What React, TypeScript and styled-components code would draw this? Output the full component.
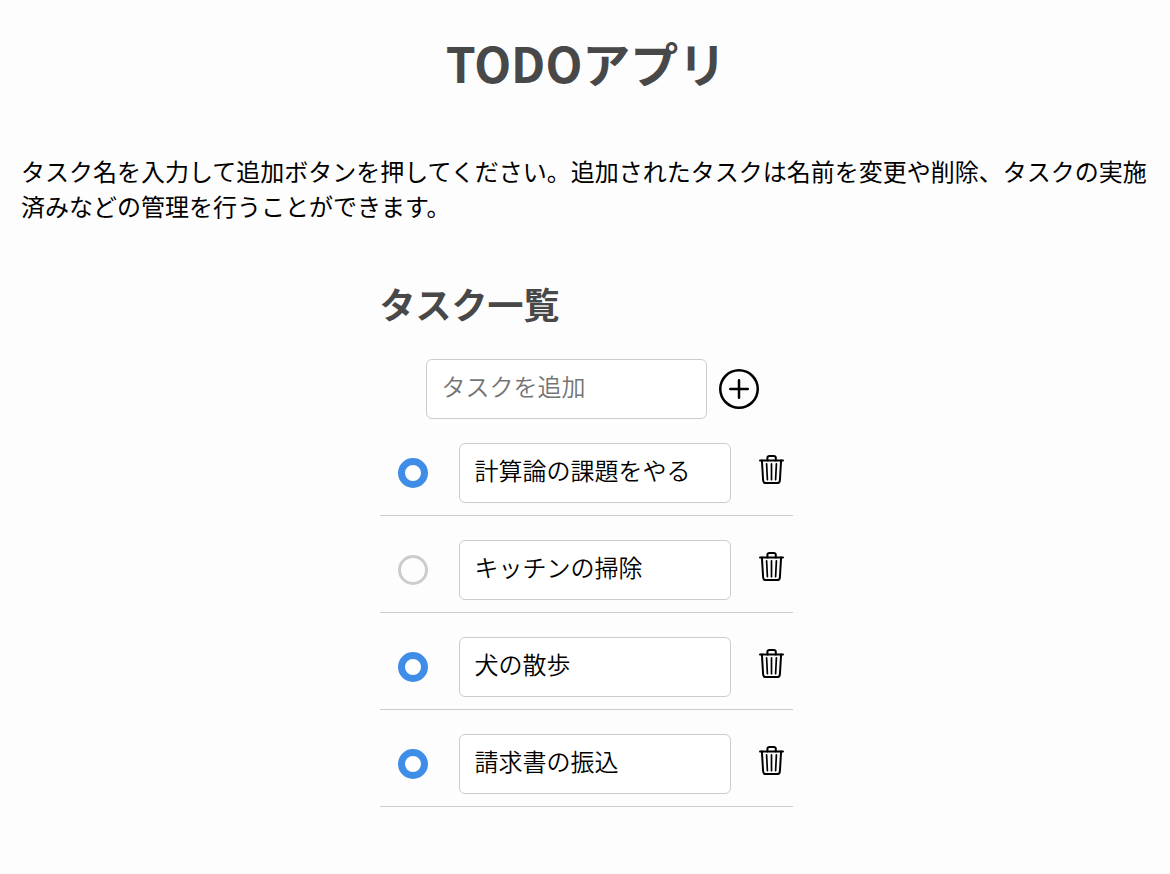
import { useState, type FormEvent } from "react";
import styled, { createGlobalStyle } from "styled-components";
import { BsPlusCircle } from "react-icons/bs";

const GlobalStyle = createGlobalStyle`
  *, *::before, *::after {
    box-sizing: border-box;
  }

  body {
    margin: 0;
    background: #fdfdfd;
    color: #000;
    font-family: "Noto Sans CJK JP", sans-serif;
    font-size: 24px;
  }
`;

const Page = styled.main`
  display: flex;
  flex-direction: column;
  padding: 26px 19px 64px 21px;
`;

const Title = styled.h1`
  margin: 0;
  color: #484848;
  font-size: 48px;
  line-height: 72px;
  text-align: center;
`;

const Lead = styled.p`
  margin: 55px 0 0;
  line-height: 35px;
`;

const Tasks = styled.section`
  width: 413px;
  max-width: 100%;
  margin: 53px auto 0;
`;

const Heading = styled.h2`
  margin: 0;
  color: #484848;
  font-size: 36px;
  line-height: 54px;
`;

const AddForm = styled.form`
  display: flex;
  align-items: center;
  gap: 12px;
  margin-top: 29px;
  padding: 0 34px 0 46px;
`;

const TextField = styled.input`
  flex: 1;
  min-width: 0;
  height: 60px;
  padding: 0 15px 8px;
  border: 1px solid #ccc;
  border-radius: 6px;
  background: #fff;
  color: #000;
  font-family: "Noto Sans CJK JP DemiLight", "Noto Sans CJK JP", sans-serif;
  font-size: 24px;
  font-weight: 350;

  &::placeholder {
    color: #757575;
    opacity: 1;
  }
`;

const IconButton = styled.button`
  display: flex;
  flex: none;
  padding: 0;
  border: 0;
  background: none;
  color: #000;
  cursor: pointer;
`;

const TaskList = styled.ul`
  margin: 0;
  padding: 0;
  list-style: none;
`;

const TaskRow = styled.li`
  display: flex;
  align-items: center;
  padding: 24px 8px 12px 18px;
  border-bottom: 1px solid #ccc;

  ${TextField} {
    margin: 0 28px 0 31px;
  }

  ${IconButton} {
    padding-bottom: 6px;
  }
`;

const DoneCheck = styled.input`
  flex: none;
  width: 30px;
  height: 30px;
  margin: 0;
  appearance: none;
  border: 3px solid #ccc;
  border-radius: 50%;
  background: transparent;
  cursor: pointer;

  &:checked {
    border: 7px solid #3f8de6;
    background: #fff;
  }
`;

function TrashIcon() {
  return (
    <svg
      width="26"
      height="30"
      viewBox="0 0 26 30"
      fill="none"
      stroke="currentColor"
      strokeWidth="2"
      strokeLinecap="round"
      strokeLinejoin="round"
      aria-hidden="true"
    >
      <path d="M1 5.4H24" />
      <path d="M8.4 5.4V3A2 2 0 0 1 10.4 1.1H14.8A2 2 0 0 1 16.8 3V5.4" />
      <path d="M2.9 5.4L4.1 25.2A3 3 0 0 0 7.1 28.1H17.9A3 3 0 0 0 20.9 25.2L22.1 5.4" />
      <path strokeWidth="1.7" d="M7.6 8.9L8.4 24.7M12.5 8.9V24.7M17.4 8.9L16.6 24.7" />
    </svg>
  );
}

interface Task {
  id: number;
  name: string;
  done: boolean;
}

const initialTasks: Task[] = [
  { id: 1, name: "計算論の課題をやる", done: true },
  { id: 2, name: "キッチンの掃除", done: false },
  { id: 3, name: "犬の散歩", done: true },
  { id: 4, name: "請求書の振込", done: true },
];

export default function App() {
  const [tasks, setTasks] = useState(initialTasks);
  const [draft, setDraft] = useState("");

  const update = (id: number, change: Partial<Task>) =>
    setTasks((list) => list.map((t) => (t.id === id ? { ...t, ...change } : t)));

  const remove = (id: number) => setTasks((list) => list.filter((t) => t.id !== id));

  const add = (event: FormEvent) => {
    event.preventDefault();
    const name = draft.trim();
    if (!name) return;
    setTasks((list) => [...list, { id: Date.now(), name, done: false }]);
    setDraft("");
  };

  return (
    <>
      <GlobalStyle />
      <Page lang="ja">
        <Title>TODOアプリ</Title>
        <Lead>
          タスク名を入力して追加ボタンを押してください。追加されたタスクは名前を変更や削除、タスクの実施済みなどの管理を行うことができます。
        </Lead>
        <Tasks>
          <Heading>タスク一覧</Heading>
          <AddForm onSubmit={add}>
            <TextField
              type="text"
              aria-label="タスクを追加"
              placeholder="タスクを追加"
              value={draft}
              onChange={(e) => setDraft(e.target.value)}
            />
            <IconButton type="submit" aria-label="追加">
              <BsPlusCircle size={40} />
            </IconButton>
          </AddForm>
          <TaskList>
            {tasks.map((task) => (
              <TaskRow key={task.id}>
                <DoneCheck
                  type="checkbox"
                  aria-label={`${task.name}を実施済みにする`}
                  checked={task.done}
                  onChange={(e) => update(task.id, { done: e.target.checked })}
                />
                <TextField
                  type="text"
                  aria-label="タスク名"
                  value={task.name}
                  onChange={(e) => update(task.id, { name: e.target.value })}
                />
                <IconButton type="button" aria-label={`${task.name}を削除`} onClick={() => remove(task.id)}>
                  <TrashIcon />
                </IconButton>
              </TaskRow>
            ))}
          </TaskList>
        </Tasks>
      </Page>
    </>
  );
}
